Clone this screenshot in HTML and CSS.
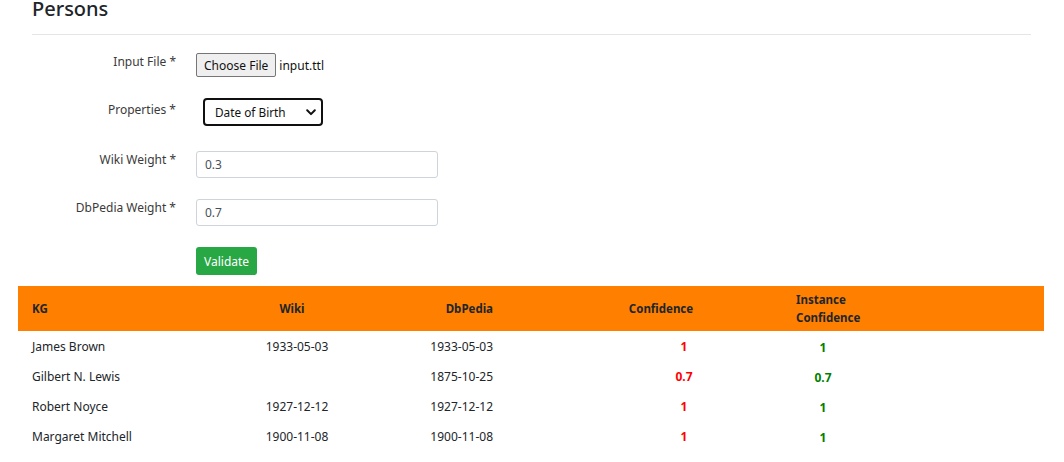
FILE: index.html
```html
<!DOCTYPE html>
<html lang="en">
<head>
<meta charset="utf-8">
<title>Persons</title>
<link rel="stylesheet" href="styles.css">
</head>
<body>
<div class="page">
  <div class="head">
    <h3 class="title">Persons</h3>
    <hr class="rule">
  </div>
  <form class="form">
    <div class="row">
      <label class="label">Input File *</label>
      <div class="file">
        <span class="file-btn">Choose File</span>
        <span class="file-name">input.ttl</span>
      </div>
    </div>
    <div class="row">
      <label class="label label-select">Properties *</label>
      <div class="select">
        <span>Date of Birth</span>
        <svg class="chev" width="10" height="7" viewBox="0 0 10 7"><path d="M1.2 1.3 5 5.1 8.8 1.3" fill="none" stroke="#111" stroke-width="2" stroke-linecap="round" stroke-linejoin="round"/></svg>
      </div>
    </div>
    <div class="row row-gap">
      <label class="label">Wiki Weight *</label>
      <div class="input">0.3</div>
    </div>
    <div class="row">
      <label class="label">DbPedia Weight *</label>
      <div class="input">0.7</div>
    </div>
    <div class="row">
      <span></span>
      <div><span class="btn">Validate</span></div>
    </div>
  </form>
  <div class="table">
    <div class="thead">
      <div class="c c1">KG</div>
      <div class="c c2">Wiki</div>
      <div class="c c3">DbPedia</div>
      <div class="c c4">Confidence</div>
      <div class="c c5 wrap">Instance Confidence</div>
      <div class="c c6"></div>
    </div>
    <div class="trow">
      <div class="c c1">James Brown</div>
      <div class="c c2 d2">1933-05-03</div>
      <div class="c c3">1933-05-03</div>
      <div class="c c4 v4 red">1</div>
      <div class="c c5 v5 green">1</div>
      <div class="c c6"></div>
    </div>
    <div class="trow">
      <div class="c c1">Gilbert N. Lewis</div>
      <div class="c c2 d2"></div>
      <div class="c c3">1875-10-25</div>
      <div class="c c4 v4 red">0.7</div>
      <div class="c c5 v5 green">0.7</div>
      <div class="c c6"></div>
    </div>
    <div class="trow">
      <div class="c c1">Robert Noyce</div>
      <div class="c c2 d2">1927-12-12</div>
      <div class="c c3">1927-12-12</div>
      <div class="c c4 v4 red">1</div>
      <div class="c c5 v5 green">1</div>
      <div class="c c6"></div>
    </div>
    <div class="trow">
      <div class="c c1">Margaret Mitchell</div>
      <div class="c c2 d2">1900-11-08</div>
      <div class="c c3">1900-11-08</div>
      <div class="c c4 v4 red">1</div>
      <div class="c c5 v5 green">1</div>
      <div class="c c6"></div>
    </div>
  </div>
</div>
</body>
</html>
```
FILE: styles.css
```css
* { box-sizing: border-box; }
html, body { margin: 0; padding: 0; background: #fff; }
body {
  font-family: "Noto Sans", "Open Sans", Arial, sans-serif;
  color: #212529;
  font-size: 12px;
  overflow: hidden;
}
.page { width: 1064px; }
.head { padding: 0 33px 0 32px; }
.title {
  margin: 0;
  font-size: 20px;
  font-weight: 500;
  line-height: 17px;
  color: #212529;
}
.rule {
  margin: 17px 0 0 0;
  border: 0;
  border-top: 1px solid #e5e5e5;
  height: 0;
}
.form {
  display: flex;
  flex-direction: column;
  gap: 21px;
  padding-top: 18px;
}
.row {
  display: grid;
  grid-template-columns: 176px 1fr;
  column-gap: 20px;
  align-items: start;
}
.row-gap { margin-top: 4px; }
.label {
  text-align: right;
  line-height: 18px;
  color: #3a3a3a;
  font-size: 12px;
}
.label-select { padding-top: 3px; }
.file { display: flex; align-items: center; gap: 3px; height: 24px; }
.file-btn {
  display: inline-flex;
  align-items: center;
  height: 24px;
  padding: 0 7px;
  background: #efefef;
  border: 1px solid #767676;
  border-radius: 2px;
  font-size: 12px;
  color: #111;
}
.file-name { font-size: 12px; color: #111; }
.select {
  margin-left: 7px;
  width: 120px;
  height: 28px;
  border: 2px solid #101010;
  border-radius: 4px;
  display: flex;
  align-items: center;
  justify-content: space-between;
  padding: 0 5px 0 10px;
  font-size: 11.8px;
  color: #111;
}
.chev { display: block; }
.input {
  width: 242px;
  height: 27px;
  border: 1px solid #ced4da;
  border-radius: 3px;
  padding: 0 8px;
  display: flex;
  align-items: center;
  font-size: 12px;
  color: #495057;
}
.btn {
  display: inline-flex;
  align-items: center;
  height: 28px;
  padding: 0 8px;
  background: #28a745;
  color: #fff;
  border-radius: 3px;
  font-size: 12px;
}
.table {
  margin: 11px 0 0 18px;
  width: 1026px;
}
.thead, .trow {
  display: grid;
  grid-template-columns: 192px 170px 182px 198px 126px 1fr;
  align-items: center;
}
.thead {
  background: #ff8000;
  height: 45px;
  font-weight: 700;
  font-size: 11.5px;
  color: #212529;
}
.trow { height: 30px; font-size: 12px; }
.c1 { padding-left: 14px; }
.c2 { text-align: center; padding-left: 4px; }
.thead .c2 { padding-left: 0; padding-right: 6px; }
.c3 { text-align: right; padding-right: 69px; }
.c4 { text-align: center; }
.v4 { padding-left: 46px; }
.c5 { padding: 0 36px; }
.wrap { line-height: 18px; }
.v5 { text-align: center; padding-top: 3px; }
.red { color: #ff0000; font-weight: 700; }
.green { color: #008000; font-weight: 700; }
```
